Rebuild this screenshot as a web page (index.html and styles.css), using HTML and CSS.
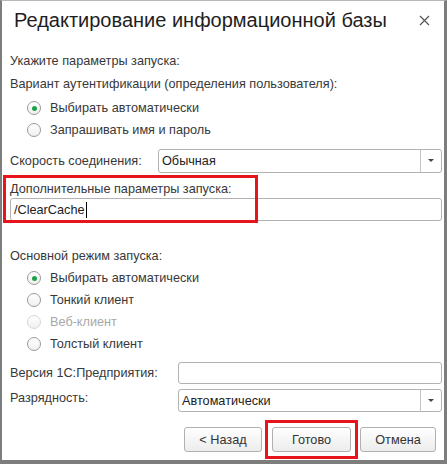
FILE: index.html
```html
<!DOCTYPE html>
<html lang="ru">

<head>
    <meta charset="UTF-8">
    <title>Редактирование информационной базы</title>
    <link rel="stylesheet" href="styles.css">
</head>

<body>
    <div class="window">
        <div class="title">
            <span>Редактирование информационной базы</span>
            <svg class="close" width="11" height="11" viewBox="0 0 11 11">
                <path d="M1 1 L10 10 M10 1 L1 10" stroke="#555" stroke-width="1.2" fill="none"/>
            </svg>
        </div>

        <div class="hint">Укажите параметры запуска:</div>
        <div class="label auth">Вариант аутентификации (определения пользователя):</div>
        <div class="radios first">
            <div class="radio checked"><i></i>Выбирать автоматически</div>
            <div class="radio"><i></i>Запрашивать имя и пароль</div>
        </div>

        <div class="row speed">
            <span class="row-label">Скорость соединения:</span>
            <div class="select"><span>Обычная</span><b></b></div>
        </div>

        <div class="extra">
            <div class="mark"></div>
            <div class="extra-label">Дополнительные параметры запуска:</div>
            <div class="input"><span>/ClearCache</span><em class="caret"></em></div>
        </div>

        <div class="label mode">Основной режим запуска:</div>
        <div class="radios">
            <div class="radio checked"><i></i>Выбирать автоматически</div>
            <div class="radio"><i></i>Тонкий клиент</div>
            <div class="radio disabled"><i></i>Веб-клиент</div>
            <div class="radio"><i></i>Толстый клиент</div>
        </div>

        <div class="row version">
            <span class="row-label">Версия 1С:Предприятия:</span>
            <div class="input"></div>
        </div>

        <div class="row bits">
            <span class="row-label">Разрядность:</span>
            <div class="select"><span>Автоматически</span><b></b></div>
        </div>

        <div class="buttons">
            <button class="btn back">&lt; Назад</button>
            <span class="done-mark"><button class="btn done">Готово</button></span>
            <button class="btn cancel">Отмена</button>
        </div>
    </div>
</body>

</html>
```

FILE: styles.css
```css
* {
    box-sizing: border-box;
}

body {
    margin: 0;
    background: #fff;
    font-family: "Liberation Sans", Arial, sans-serif;
    font-size: 12.7px;
    color: #383838;
}

.window {
    height: 464px;
    border-top: 1px solid #b8b8b8;
    border-left: 2px solid #7d7d7d;
    border-right: 3px solid #7d7d7d;
    border-bottom: 4px solid #7d7d7d;
    padding: 0 2px 0 8px;
}

.title {
    height: 39px;
    line-height: 39px;
    font-size: 20px;
    color: #1e1e1e;
    padding-left: 4px;
    display: flex;
    justify-content: space-between;
    align-items: center;
}

.close {
    margin-right: 12px;
}

.hint {
    margin-top: 10px;
    line-height: 22px;
}

.label {
    line-height: 22px;
}

.auth {
    margin-top: 1px;
}

.radios.first {
    margin-top: 2px;
}

.radio {
    height: 22px;
    display: flex;
    align-items: center;
    padding-left: 17px;
}

.radio i {
    width: 14px;
    height: 14px;
    border: 1px solid #9a9a9a;
    border-radius: 50%;
    background: linear-gradient(#fff, #f0f0f0);
    margin-right: 9px;
    display: flex;
    align-items: center;
    justify-content: center;
}

.radio.checked i:after {
    content: "";
    width: 5px;
    height: 5px;
    border-radius: 50%;
    background: #20a04a;
}

.radio.disabled {
    color: #a8a8a8;
}

.radio.disabled i {
    border-color: #d6d6d6;
}

.row {
    display: flex;
    align-items: center;
}

.row-label {
    flex: none;
}

.speed {
    margin-top: 8px;
    height: 24px;
}

.speed .row-label {
    width: 148px;
}

.select,
.input {
    flex: 1;
    height: 100%;
    border: 1px solid #b2b2b2;
    border-radius: 3px;
    background: #fff;
    display: flex;
    align-items: center;
    color: #222;
}

.select span,
.input span {
    flex: 1;
    padding-left: 3px;
}

.select b {
    width: 21px;
    height: 100%;
    border-left: 1px solid #c4c4c4;
    position: relative;
}

.select b:after {
    content: "";
    position: absolute;
    left: 7px;
    top: 9px;
    border-left: 3px solid transparent;
    border-right: 3px solid transparent;
    border-top: 3px solid #444;
}

.extra {
    position: relative;
    margin-top: 7px;
}

.mark {
    position: absolute;
    left: -7px;
    top: -5px;
    width: 255px;
    height: 48px;
    border: 3px solid #e8141b;
}

.extra-label {
    line-height: 18px;
}

.extra .input {
    height: 23px;
}

.extra .input span {
    flex: none;
}

.caret {
    width: 1px;
    height: 16px;
    background: #000;
    margin-left: 1px;
}

.mode {
    margin-top: 24px;
}

.version {
    margin-top: 7px;
    height: 22px;
}

.version .row-label,
.bits .row-label {
    width: 168px;
}

.bits {
    margin-top: 5px;
    height: 23px;
    align-items: flex-start;
}

.bits .row-label {
    line-height: 18px;
}

.buttons {
    margin-top: 8px;
    display: flex;
    justify-content: flex-end;
    align-items: center;
    padding-right: 6px;
}

.btn {
    height: 25px;
    border: 1px solid #b0b0b0;
    border-radius: 3px;
    background: linear-gradient(#ffffff, #ececec);
    font-family: "Liberation Sans", Arial, sans-serif;
    font-size: 12.7px;
    color: #333;
    padding: 0;
}

.back {
    width: 78px;
    margin-right: 3px;
}

.done-mark {
    display: flex;
    border: 3px solid #e8141b;
    padding: 4px;
    margin-right: 2px;
}

.done {
    width: 79px;
}

.cancel {
    width: 76px;
}
```
